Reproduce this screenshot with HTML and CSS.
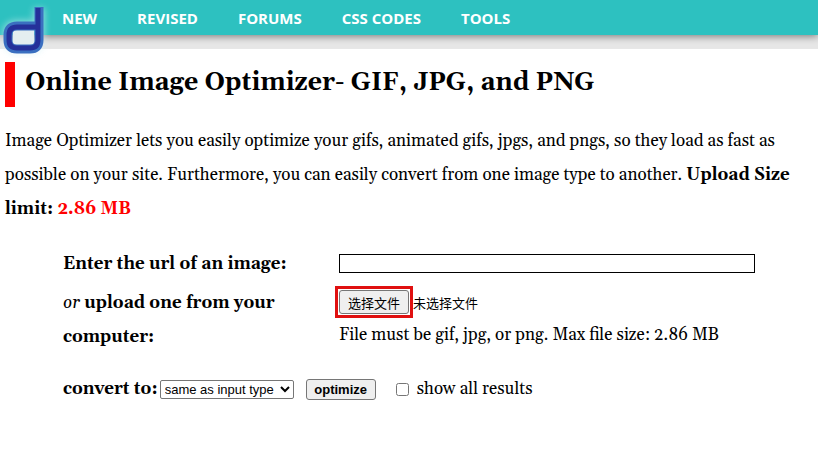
FILE: index.html
```html
<!DOCTYPE html>
<html lang="en">
<head>
<meta charset="utf-8">
<title>Online Image Optimizer</title>
<link rel="stylesheet" href="styles.css">
</head>
<body>
<header class="topbar">
  <a class="logo" href="#" aria-label="Home">
    <svg width="56" height="58" viewBox="0 0 56 58" fill="none">
      <path class="logo-glow" d="M39 8V40Q39 49 30 49H17Q8 49 8 40V35Q8 26 17 26H34"/>
      <path class="logo-hole" d="M13 30H34V46H13Z"/>
      <path class="logo-edge" d="M39 7V40Q39 49 30 49H17Q8 49 8 40V35Q8 26 17 26H39"/>
      <path class="logo-core" d="M38 8V40Q38 48 30 48H17Q9 48 9 40V35Q9 27 17 27H38"/>
    </svg>
  </a>
  <nav class="nav">
    <a href="#">NEW</a>
    <a href="#">REVISED</a>
    <a href="#">FORUMS</a>
    <a href="#">CSS CODES</a>
    <a href="#">TOOLS</a>
  </nav>
</header>
<div class="strip"></div>
<main class="content">
  <h1>Online Image Optimizer- GIF, JPG, and PNG</h1>
  <p class="intro">Image Optimizer lets you easily optimize your gifs, animated gifs, jpgs, and pngs, so they load as fast as possible on your site. Furthermore, you can easily convert from one image type to another. <b>Upload Size limit: <span class="limit">2.86 MB</span></b></p>
  <form class="form">
    <div class="row">
      <label class="name" for="url">Enter the url of an image:</label>
      <input class="url" id="url" type="text">
    </div>
    <div class="row">
      <label class="name" for="file"><i class="or">or</i> upload one from your computer:</label>
      <div>
        <div class="picker">
          <input id="file" type="file" hidden>
          <span class="mark"><button class="choose" type="button" onclick="document.getElementById('file').click()">选择文件</button></span>
          <span class="chosen">未选择文件</span>
        </div>
        <div>File must be gif, jpg, or png. Max file size: 2.86 MB</div>
      </div>
    </div>
    <div class="actions">
      <label class="name" for="type">convert to:</label>
      <select class="type" id="type"><option>same as input type</option><option>gif</option><option>jpg</option><option>png</option></select>
      <button class="go" type="submit">optimize</button>
      <input class="check" id="all" type="checkbox">
      <label for="all">show all results</label>
    </div>
  </form>
</main>
</body>
</html>
```
FILE: styles.css
```css
body {
  margin: 0;
  background: #fff;
  color: #000;
  font-family: Georgia, Gelasio, "Liberation Serif", serif;
  font-size: 17px;
  line-height: 34px;
}

.topbar {
  position: relative;
  height: 35px;
  padding-left: 62px;
  background: #2dc1c0;
  box-shadow: 0 1px 8px rgba(0, 0, 0, 0.5);
}

.logo {
  position: absolute;
  left: 0;
  top: 0;
  line-height: 0;
}

.logo-glow {
  stroke: #d8f0f4;
  stroke-width: 12px;
  opacity: 0.5;
  filter: blur(3px);
}

.logo-hole {
  fill: #e4eef0;
}

.logo-edge {
  stroke: #3a6fc0;
  stroke-width: 9px;
}

.logo-core {
  stroke: #25309a;
  stroke-width: 5px;
}

.nav {
  display: flex;
  gap: 40px;
}

.nav a {
  color: #fff;
  font: bold 15px/37px "Open Sans", sans-serif;
  text-decoration: none;
}

.strip {
  height: 14px;
  background: #e7e7e7;
}

.content {
  padding: 13px 5px;
}

h1 {
  margin: 0;
  padding: 0 0 3px 10px;
  border-left: 10px solid #f00;
  font-size: 25px;
  line-height: 42px;
}

.intro {
  margin: 17px 0 21px;
}

.limit {
  color: #f00;
}

.form {
  padding: 0 58px;
}

.row {
  display: grid;
  grid-template-columns: 236px 1fr;
  column-gap: 40px;
  margin-bottom: 5px;
}

.name {
  font-weight: bold;
}

.or {
  font-weight: normal;
}

.url {
  box-sizing: border-box;
  width: 100%;
  height: 19px;
  margin-top: 7px;
  border: 1px solid #000;
}

.picker {
  display: flex;
  align-items: center;
  height: 32px;
  margin-left: -4px;
  font: 13px "Liberation Sans", "Noto Sans CJK SC", sans-serif;
}

.mark {
  display: flex;
  padding: 1px;
  border: 3px solid #e01010;
}

.choose,
.go {
  box-sizing: border-box;
  padding: 0;
  border: 1px solid #767676;
  border-radius: 3px;
  background: #efefef;
  color: #000;
  width: 70px;
}

.choose {
  height: 24px;
  font: 13px "Noto Sans CJK SC", sans-serif;
}

.actions {
  display: flex;
  align-items: center;
  margin-top: 18px;
}

.type {
  width: 134px;
  height: 19px;
  margin-left: 2px;
  padding: 0;
  border: 1px solid #767676;
  border-radius: 2px;
  background: #fff;
  color: #000;
  font: 13px "Liberation Sans", sans-serif;
}

.go {
  height: 21px;
  margin-left: 12px;
  font: bold 13px "Liberation Sans", sans-serif;
}

.check {
  width: 13px;
  height: 13px;
  margin: 0 8px 0 20px;
}
```
